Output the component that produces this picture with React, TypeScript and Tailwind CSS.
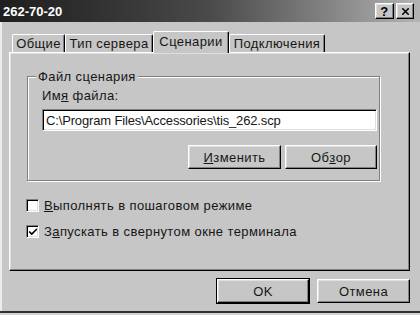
import { Check, X } from "lucide-react";

const raised =
  "bg-[#c6c6c6] border border-t-white border-l-white border-r-black border-b-black shadow-[inset_-1px_-1px_#808080,inset_1px_1px_#dfdfdf]";

const sunken =
  "bg-white border border-t-[#808080] border-l-[#808080] border-r-white border-b-white shadow-[inset_1px_1px_#000,inset_-1px_-1px_#dfdfdf]";

const Tab = ({ label, width, active }: { label: string; width: string; active?: boolean }) => (
  <div
    className={`${width} ${
      active ? "h-[22px] pt-[2px] -mb-px relative z-10" : "h-[18px] pt-[1px]"
    } flex justify-center bg-[#c6c6c6] border-t border-l border-t-white border-l-white border-r border-r-black rounded-t-[2px] shadow-[inset_-1px_0_#808080]`}
  >
    {label}
  </div>
);

const Button = ({ children, width, isDefault }: { children: React.ReactNode; width: string; isDefault?: boolean }) => (
  <div className={`${width} h-[24px] ${isDefault ? "outline outline-1 outline-black" : ""}`}>
    <div className={`${raised} w-full h-full flex items-center justify-center`}>{children}</div>
  </div>
);

const CheckBox = ({ checked, children }: { checked?: boolean; children: React.ReactNode }) => (
  <div className="flex items-center gap-[5px] h-[15px]">
    <div className={`${sunken} w-[13px] h-[13px] flex items-center justify-center`}>
      {checked && <Check className="w-[10px] h-[10px] text-black" strokeWidth={4} />}
    </div>
    <span>{children}</span>
  </div>
);

const App = () => {
  return (
    <div className="w-[420px] h-[315px] bg-[#d4d4d4] overflow-hidden font-['Liberation_Sans',Arial,sans-serif] text-[13px] leading-[15px] tracking-[0.4px] text-[#161616]">
      <div className="h-[313px] bg-[#c6c6c6] flex flex-col border-b-2 border-b-[#303030]">
        <div className="h-[22px] flex items-center pl-[3px] pr-[6px] bg-gradient-to-r from-[#1e1e1e] via-[#4a4a4a] to-[#b4b4b4]">
          <span className="font-bold text-white flex-1 tracking-normal">262-70-20</span>
          <div className="flex gap-[2px]">
            <div className={`${raised} w-[19px] h-[16px] flex items-center justify-center font-bold text-[13px] leading-none text-black`}>?</div>
            <div className={`${raised} w-[18px] h-[16px] flex items-center justify-center text-black`}>
              <X className="w-[11px] h-[11px]" strokeWidth={3.5} />
            </div>
          </div>
        </div>

        <div className="flex-1 flex flex-col border-l-2 border-l-[#ececec]">
          <div className="flex items-end ml-[10px] mt-[9px]">
            <Tab label="Общие" width="w-[53px]" />
            <Tab label="Тип сервера" width="w-[88px]" />
            <Tab label="Сценарии" width="w-[76px]" active />
            <Tab label="Подключения" width="w-[96px]" />
          </div>

          <div className={`${raised} ml-[7px] w-[401px] h-[219px] flex flex-col`}>
            <fieldset className="ml-[17px] mt-[16px] w-[353px] pl-[14px] pr-[2px] pb-[11px] border border-[#808080] shadow-[1px_1px_0_#fff,inset_1px_1px_0_#fff]">
              <legend className="-ml-[6px] px-[2px] bg-[#c6c6c6]">Файл сценария</legend>
              <div className="mt-[4px]">
                Им<u>я</u> файла:
              </div>
              <div className={`${sunken} mt-[6px] h-[22px] flex items-center px-[3px] tracking-[-0.15px]`}>
                C:\Program Files\Accessories\tis_262.scp
              </div>
              <div className="mt-[14px] flex justify-end gap-[4px]">
                <Button width="w-[93px]">
                  <u>И</u>зменить
                </Button>
                <Button width="w-[92px]">
                  Об<u>з</u>ор
                </Button>
              </div>
            </fieldset>

            <div className="ml-[16px] mt-[17px] flex flex-col gap-[11px]">
              <CheckBox>
                <u>В</u>ыполнять в пошаговом режиме
              </CheckBox>
              <CheckBox checked>
                З<u>а</u>пускать в свернутом окне терминала
              </CheckBox>
            </div>
          </div>

          <div className="mt-[8px] ml-[215px] flex gap-[8px]">
            <Button width="w-[92px]" isDefault>
              OK
            </Button>
            <Button width="w-[93px]">Отмена</Button>
          </div>
        </div>
      </div>
    </div>
  );
};

export default App;
